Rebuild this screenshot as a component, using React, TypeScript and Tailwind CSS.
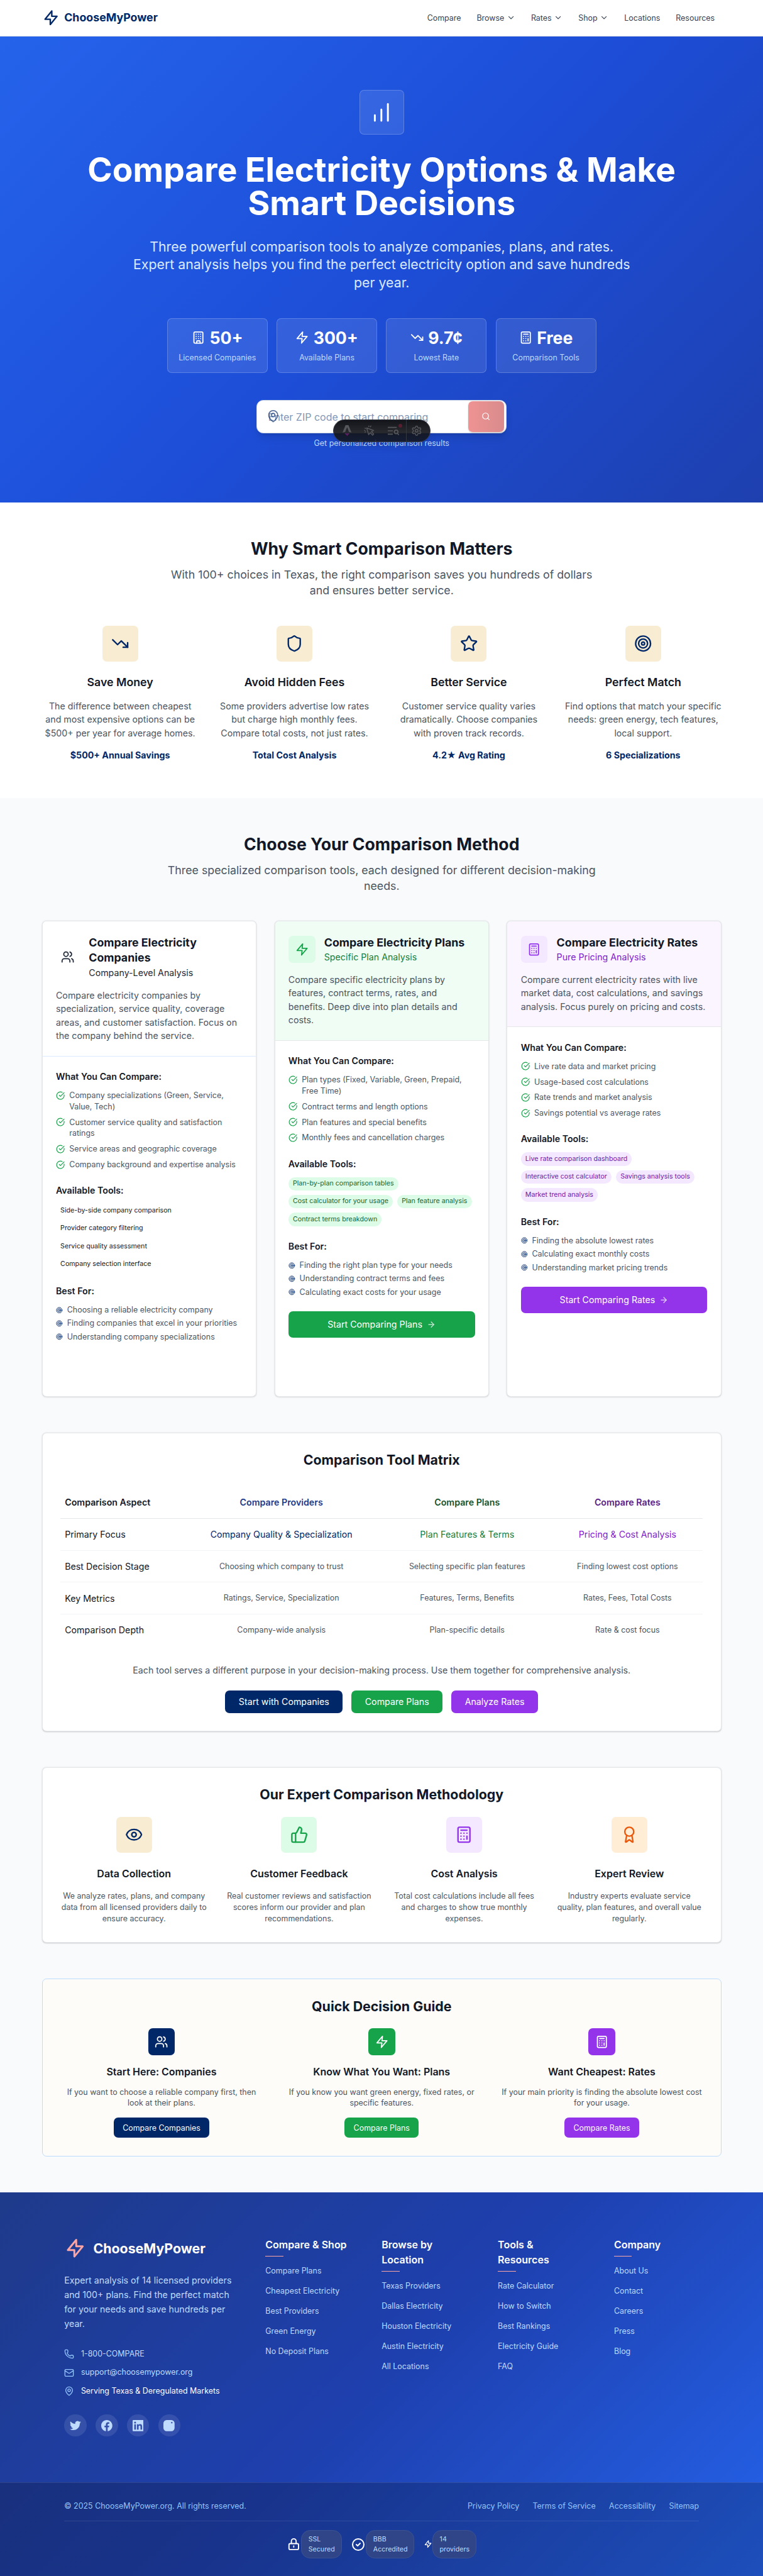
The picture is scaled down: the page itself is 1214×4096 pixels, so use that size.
import React from "react";
import {
  ArrowRight,
  Award,
  Building,
  Calculator,
  ChevronDown,
  CircleCheckBig,
  Eye,
  Mail,
  MapPin,
  Phone,
  Search,
  Settings,
  Shield,
  Star,
  Target,
  ThumbsUp,
  TrendingDown,
  Users,
} from "lucide-react";

type IconProps = { className?: string };
type IconType = React.ComponentType<IconProps>;

function Bolt({ className }: IconProps) {
  return (
    <svg className={className} viewBox="0 0 24 24" fill="none" stroke="currentColor" strokeWidth={2} strokeLinecap="round" strokeLinejoin="round">
      <path d="M13 10V3L4 14h7v7l9-11h-7z" />
    </svg>
  );
}

function Zap({ className }: IconProps) {
  return (
    <svg className={className} viewBox="0 0 24 24" fill="none" stroke="currentColor" strokeWidth={2} strokeLinecap="round" strokeLinejoin="round">
      <polygon points="13 2 3 14 12 14 11 22 21 10 12 10 13 2" />
    </svg>
  );
}

function Bars({ className }: IconProps) {
  return (
    <svg className={className} viewBox="0 0 24 24" fill="none" stroke="currentColor" strokeWidth={2} strokeLinecap="round">
      <path d="M5 21v-6M12 21V9M19 21V3" />
    </svg>
  );
}

function Lock({ className }: IconProps) {
  return (
    <svg className={className} viewBox="0 0 24 24" fill="none" stroke="currentColor" strokeWidth={2} strokeLinecap="round" strokeLinejoin="round">
      <path d="M12 15v2m-6 4h12a2 2 0 002-2v-6a2 2 0 00-2-2H6a2 2 0 00-2 2v6a2 2 0 002 2zm10-10V7a4 4 0 00-8 0v4h8z" />
    </svg>
  );
}

function CheckRing({ className }: IconProps) {
  return (
    <svg className={className} viewBox="0 0 24 24" fill="none" stroke="currentColor" strokeWidth={2} strokeLinecap="round" strokeLinejoin="round">
      <path d="M9 12l2 2 4-4m6 2a9 9 0 11-18 0 9 9 0 0118 0z" />
    </svg>
  );
}

const container = "mx-auto w-full max-w-[1280px] px-8";

function Header() {
  const nav: [string, boolean][] = [
    ["Compare", false],
    ["Browse", true],
    ["Rates", true],
    ["Shop", true],
    ["Locations", false],
    ["Resources", false],
  ];
  return (
    <header className="h-[65px] border-b border-[#e5e7eb] bg-white">
      <div className={`${container} flex h-16 items-center justify-between`}>
        <div className="flex items-center gap-2 text-[#002868]">
          <Bolt className="size-8" />
          <span className="text-xl font-bold">ChooseMyPower</span>
        </div>
        <nav className="flex gap-1 text-sm text-[#374151]">
          {nav.map(([label, menu]) => (
            <a key={label} className="flex items-center gap-1 px-3 py-2">
              {label}
              {menu && <ChevronDown className="size-4" />}
            </a>
          ))}
        </nav>
      </div>
    </header>
  );
}

function DevToolbar() {
  return (
    <div className="absolute left-[137px] top-[35px] flex h-[41px] w-[175px] items-center rounded-full border border-[#343841] bg-linear-to-b from-[#13151a] to-[#13151a]/85 text-[#55575c] shadow-lg">
      <div className="flex w-[44px] justify-center pl-1">
        <svg className="h-[20px] w-[16px]" viewBox="0 0 16 20">
          <path fill="#55575c" d="M5.4 0h5.2L16 13.4c-1.5-.6-3-.9-4.5-1.1L8.3 3.6 4.6 12.3c-1.5.2-3.1.5-4.6 1.1z" />
          <path fill="#5c1f63" d="M4 14.2c2.6 1.1 5.6 1.1 8.2 0 .2 2.3-2.6 2.6-3.7 5.6-1-2.6-4-2.6-4.5-5.6z" />
        </svg>
      </div>
      <div className="flex w-[40px] justify-center">
        <svg className="size-[20px]" viewBox="0 0 20 20" fill="none" stroke="currentColor" strokeWidth="1.7" strokeLinejoin="round" strokeLinecap="round">
          <path d="M5 5l3.500 12 3-3.500 4 4.500 2-2-4-4.500 4-2z" />
          <path d="M2 5.500l1 .4M1 9.500h1M9 1.500l-.5 1M12.500 1.500l-1 1.500M2 12.500l1-.6" />
        </svg>
      </div>
      <div className="relative flex w-[46px] justify-center">
        <svg className="h-[18px] w-[21px]" viewBox="0 0 21 18" fill="none" stroke="currentColor" strokeWidth="1.9">
          <path d="M0 3h16M0 9h9M0 15h9" />
          <circle cx="15" cy="11" r="3.2" />
          <path d="M17 13.500l3 3" />
        </svg>
        <span className="absolute right-[7px] top-[-4px] size-[7px] rounded-full bg-[#571f30]" />
      </div>
      <div className="flex h-full flex-1 items-center justify-center border-l border-[#343841] pr-[6px]">
        <Settings className="size-[20px]" />
      </div>
    </div>
  );
}

function Hero() {
  const stats: [IconType, string, string][] = [
    [Building, "50+", "Licensed Companies"],
    [Zap, "300+", "Available Plans"],
    [TrendingDown, "9.7¢", "Lowest Rate"],
    [Calculator, "Free", "Comparison Tools"],
  ];
  return (
    <section className="h-[834px] bg-[linear-gradient(135deg,#2563eb_0%,#1d4ed8_50%,#1e40af_100%)] pt-24 text-white">
      <div className={`${container} flex flex-col items-center text-center`}>
        <div className="flex size-20 items-center justify-center rounded-lg border border-white/20 bg-white/10">
          <Bars className="size-10" />
        </div>
        <h1 className="mt-8 text-6xl font-bold">
          Compare Electricity Options &amp; Make
          <br />
          Smart Decisions
        </h1>
        <p className="mt-8 w-[896px] text-2xl text-[#dbeafe]">
          Three powerful comparison tools to analyze companies, plans, and rates.
          <br />
          Expert analysis helps you find the perfect electricity option and save hundreds
          <br />
          per year.
        </p>
        <div className="mt-12 grid w-[768px] grid-cols-4 gap-4">
          {stats.map(([Icon, value, label]) => (
            <div key={label} className="rounded-lg border border-white/20 bg-white/10 p-4">
              <div className="flex items-center justify-center gap-2 text-3xl font-bold">
                <Icon className="size-6" />
                {value}
              </div>
              <div className="mt-2 whitespace-nowrap text-sm text-[#bfdbfe]">{label}</div>
            </div>
          ))}
        </div>
        <div className="relative mt-12 w-[448px]">
          <div className="flex h-[60px] items-center rounded-xl border-2 border-[#cbd5e1] bg-white pl-[20px] pr-1 shadow-lg">
            <span className="flex-1 pt-[2px] text-left text-lg text-[#8298b6]">Enter ZIP code to start comparing</span>
            <span className="flex h-14 w-16 items-center justify-center rounded-lg bg-linear-to-r from-[#ef9393] to-[#d98b8d] shadow-sm">
              <Search className="size-4" />
            </span>
          </div>
          <MapPin className="absolute left-[18px] top-[17px] size-6 text-[#002868]/65" />
          <p className="mt-2 text-sm text-[#bfdbfe]">Get personalized comparison results</p>
          <DevToolbar />
        </div>
      </div>
    </section>
  );
}

function SectionHead({ title, children }: { title: string; children: React.ReactNode }) {
  return (
    <div className="text-center">
      <h2 className="text-3xl font-bold text-[#111827]">{title}</h2>
      <p className="mx-auto mt-4 w-[780px] text-xl text-[#4b5563]">{children}</p>
    </div>
  );
}

function Why() {
  const items: [IconType, string, string[], string][] = [
    [TrendingDown, "Save Money", ["The difference between cheapest", "and most expensive options can be", "$500+ per year for average homes."], "$500+ Annual Savings"],
    [Shield, "Avoid Hidden Fees", ["Some providers advertise low rates", "but charge high monthly fees.", "Compare total costs, not just rates."], "Total Cost Analysis"],
    [Star, "Better Service", ["Customer service quality varies", "dramatically. Choose companies", "with proven track records."], "4.2★ Avg Rating"],
    [Target, "Perfect Match", ["Find options that match your specific", "needs: green energy, tech features,", "local support."], "6 Specializations"],
  ];
  return (
    <section className="h-[528px] bg-white pt-16">
      <div className={container}>
        <SectionHead title="Why Smart Comparison Matters">
          With 100+ choices in Texas, the right comparison saves you hundreds of dollars
          <br />
          and ensures better service.
        </SectionHead>
        <div className="mt-12 grid grid-cols-4 gap-8 text-center">
          {items.map(([Icon, title, lines, stat]) => (
            <div key={title} className="flex flex-col items-center">
              <div className="flex size-16 items-center justify-center rounded-lg bg-[#f8ecd3] text-[#002868]">
                <Icon className="size-8" />
              </div>
              <h3 className="mt-6 text-xl font-semibold text-[#111827]">{title}</h3>
              <p className="mt-4 whitespace-nowrap text-[#4b5563]">
                {lines.map((l) => (
                  <span key={l} className="block">
                    {l}
                  </span>
                ))}
              </p>
              <div className="mt-4 h-6 font-bold text-[#002868]">{stat}</div>
            </div>
          ))}
        </div>
      </div>
    </section>
  );
}

type Method = {
  icon: IconType;
  title: string;
  sub: string;
  lines: string[];
  compare: string[][];
  tools: string[];
  best: string[];
  cta?: string;
  head: string;
  box: string;
  subColor: string;
  chip: string;
  button: string;
};

const methods: Method[] = [
  {
    icon: Users,
    title: "Compare Electricity Companies",
    sub: "Company-Level Analysis",
    lines: ["Compare electricity companies by", "specialization, service quality, coverage", "areas, and customer satisfaction. Focus on", "the company behind the service."],
    compare: [["Company specializations (Green, Service,", "Value, Tech)"], ["Customer service quality and satisfaction", "ratings"], ["Service areas and geographic coverage"], ["Company background and expertise analysis"]],
    tools: ["Side-by-side company comparison", "Provider category filtering", "Service quality assessment", "Company selection interface"],
    best: ["Choosing a reliable electricity company", "Finding companies that excel in your priorities", "Understanding company specializations"],
    head: "border-[#dbeafe] bg-white",
    box: "text-[#1f2937]",
    subColor: "text-[#1f2937]",
    chip: "text-[#111827]",
    button: "",
  },
  {
    icon: Zap,
    title: "Compare Electricity Plans",
    sub: "Specific Plan Analysis",
    lines: ["Compare specific electricity plans by", "features, contract terms, rates, and", "benefits. Deep dive into plan details and", "costs."],
    compare: [["Plan types (Fixed, Variable, Green, Prepaid,", "Free Time)"], ["Contract terms and length options"], ["Plan features and special benefits"], ["Monthly fees and cancellation charges"]],
    tools: ["Plan-by-plan comparison tables", "Cost calculator for your usage", "Plan feature analysis", "Contract terms breakdown"],
    best: ["Finding the right plan type for your needs", "Understanding contract terms and fees", "Calculating exact costs for your usage"],
    cta: "Start Comparing Plans",
    head: "border-[#e5e7eb] bg-[#f0fdf4]",
    box: "bg-[#dcfce7] text-[#16a34a]",
    subColor: "text-[#15803d]",
    chip: "bg-[#dcfce7] text-[#166534]",
    button: "bg-[#16a34a]",
  },
  {
    icon: Calculator,
    title: "Compare Electricity Rates",
    sub: "Pure Pricing Analysis",
    lines: ["Compare current electricity rates with live", "market data, cost calculations, and savings", "analysis. Focus purely on pricing and costs."],
    compare: [["Live rate data and market pricing"], ["Usage-based cost calculations"], ["Rate trends and market analysis"], ["Savings potential vs average rates"]],
    tools: ["Live rate comparison dashboard", "Interactive cost calculator", "Savings analysis tools", "Market trend analysis"],
    best: ["Finding the absolute lowest rates", "Calculating exact monthly costs", "Understanding market pricing trends"],
    cta: "Start Comparing Rates",
    head: "border-[#e5e7eb] bg-[#faf5ff]",
    box: "bg-[#f3e8ff] text-[#9333ea]",
    subColor: "text-[#7e22ce]",
    chip: "bg-[#f3e8ff] text-[#6b21a8]",
    button: "bg-[#9333ea]",
  },
];

function MethodCard({ m }: { m: Method }) {
  const Icon = m.icon;
  return (
    <div className="overflow-hidden rounded-lg border border-[#e5e7eb] bg-white shadow-sm">
      <div className={`border-b p-6 ${m.head}`}>
        <div className="flex items-center gap-4">
          <div className={`flex h-12 w-12 items-center justify-center rounded-lg ${m.box}`}>
            <Icon className="size-6" />
          </div>
          <div>
            <h3 className="text-xl font-bold text-[#111827]">{m.title}</h3>
            <p className={m.subColor}>{m.sub}</p>
          </div>
        </div>
        <p className="mt-4 whitespace-nowrap text-[#4b5563]">
          {m.lines.map((l) => (
            <span key={l} className="block">
              {l}
            </span>
          ))}
        </p>
      </div>
      <div className="p-6">
        <h4 className="font-semibold text-[#111827]">What You Can Compare:</h4>
        <ul className="mt-3 flex flex-col gap-2 text-sm text-[#4b5563]">
          {m.compare.map((lines) => (
            <li key={lines[0]} className="flex gap-2 whitespace-nowrap">
              <CircleCheckBig className="mt-0.5 size-4 shrink-0 text-[#16a34a]" />
              <span>
                {lines.map((l) => (
                  <span key={l} className="block">
                    {l}
                  </span>
                ))}
              </span>
            </li>
          ))}
        </ul>
        <h4 className="mt-6 font-semibold text-[#111827]">Available Tools:</h4>
        <div className="mt-3 flex flex-wrap gap-2 text-xs">
          {m.tools.map((t) => (
            <span key={t} className={`rounded-full px-2 py-1 ${m.chip}`}>
              {t}
            </span>
          ))}
        </div>
        <h4 className="mt-6 font-semibold text-[#111827]">Best For:</h4>
        <ul className="mt-3 flex flex-col gap-1 text-sm text-[#4b5563]">
          {m.best.map((b) => (
            <li key={b} className="flex items-center gap-2 whitespace-nowrap">
              <Target className="size-3 shrink-0 text-[#002868]" />
              {b}
            </li>
          ))}
        </ul>
        {m.cta && (
          <button className={`mt-6 flex h-12 w-full items-center justify-center gap-2 rounded-lg text-white ${m.button}`}>
            {m.cta}
            <ArrowRight className="size-4 opacity-80" />
          </button>
        )}
      </div>
    </div>
  );
}

function Matrix() {
  const rows = [
    ["Primary Focus", "Company Quality & Specialization", "Plan Features & Terms", "Pricing & Cost Analysis"],
    ["Best Decision Stage", "Choosing which company to trust", "Selecting specific plan features", "Finding lowest cost options"],
    ["Key Metrics", "Ratings, Service, Specialization", "Features, Terms, Benefits", "Rates, Fees, Total Costs"],
    ["Comparison Depth", "Company-wide analysis", "Plan-specific details", "Rate & cost focus"],
  ];
  const focus = ["", "text-[#002868]", "text-[#15803d]", "text-[#7e22ce]"];
  const cols = "grid grid-cols-[215fr_361fr_304fr_270fr] items-center";
  return (
    <div className="mt-16 rounded-lg border border-[#e5e7eb] bg-white p-8 shadow-sm">
      <h2 className="text-center text-2xl font-bold text-[#111827]">Comparison Tool Matrix</h2>
      <div className="mt-8 text-center">
        <div className={`${cols} border-b-2 border-[#e5e7eb] py-4 font-semibold`}>
          <div className="pl-2 text-left text-[#111827]">Comparison Aspect</div>
          <div className="text-[#1e3a8a]">Compare Providers</div>
          <div className="text-[#14532d]">Compare Plans</div>
          <div className="text-[#581c87]">Compare Rates</div>
        </div>
        {rows.map((row, i) => (
          <div key={row[0]} className={`${cols} border-[#f3f4f6] py-4 ${i < 3 ? "border-b" : ""}`}>
            {row.map((cell, j) => (
              <div
                key={cell}
                className={j === 0 ? "pl-2 text-left text-[#111827]" : i === 0 ? focus[j] : "text-sm text-[#4b5563]"}
              >
                {cell}
              </div>
            ))}
          </div>
        ))}
      </div>
      <p className="mt-8 text-center text-[#4b5563]">
        Each tool serves a different purpose in your decision-making process. Use them together for comprehensive analysis.
      </p>
      <div className="mt-6 flex justify-center gap-4 text-white">
        <button className="rounded-lg bg-[#002868] px-6 py-2">Start with Companies</button>
        <button className="rounded-lg bg-[#16a34a] px-6 py-2">Compare Plans</button>
        <button className="rounded-lg bg-[#9333ea] px-6 py-2">Analyze Rates</button>
      </div>
    </div>
  );
}

function Methodology() {
  const items: [IconType, string, string, string[]][] = [
    [Eye, "bg-[#f8ecd3] text-[#002868]", "Data Collection", ["We analyze rates, plans, and company", "data from all licensed providers daily to", "ensure accuracy."]],
    [ThumbsUp, "bg-[#dcfce7] text-[#16a34a]", "Customer Feedback", ["Real customer reviews and satisfaction", "scores inform our provider and plan", "recommendations."]],
    [Calculator, "bg-[#f3e8ff] text-[#9333ea]", "Cost Analysis", ["Total cost calculations include all fees", "and charges to show true monthly", "expenses."]],
    [Award, "bg-[#ffedd5] text-[#ea580c]", "Expert Review", ["Industry experts evaluate service", "quality, plan features, and overall value", "regularly."]],
  ];
  return (
    <div className="mt-16 rounded-lg border border-[#e5e7eb] bg-white p-8 text-center shadow-sm">
      <h2 className="text-2xl font-bold text-[#111827]">Our Expert Comparison Methodology</h2>
      <div className="mt-6 grid grid-cols-4 gap-8">
        {items.map(([Icon, tone, title, lines]) => (
          <div key={title} className="flex flex-col items-center">
            <div className={`flex size-16 items-center justify-center rounded-lg ${tone}`}>
              <Icon className="size-8" />
            </div>
            <h3 className="mt-6 text-lg font-semibold text-[#111827]">{title}</h3>
            <p className="mt-4 whitespace-nowrap text-sm text-[#4b5563]">
              {lines.map((l) => (
                <span key={l} className="block">
                  {l}
                </span>
              ))}
            </p>
          </div>
        ))}
      </div>
    </div>
  );
}

function Guide() {
  const items: [IconType, string, string, string[], string][] = [
    [Users, "bg-[#002868]", "Start Here: Companies", ["If you want to choose a reliable company first, then", "look at their plans."], "Compare Companies"],
    [Zap, "bg-[#16a34a]", "Know What You Want: Plans", ["If you know you want green energy, fixed rates, or", "specific features."], "Compare Plans"],
    [Calculator, "bg-[#9333ea]", "Want Cheapest: Rates", ["If your main priority is finding the absolute lowest cost", "for your usage."], "Compare Rates"],
  ];
  return (
    <div className="mt-16 rounded-lg border border-[#bfdbfe] bg-[#fefcf8] p-8 text-center">
      <h2 className="text-2xl font-bold text-[#111827]">Quick Decision Guide</h2>
      <div className="mt-6 grid grid-cols-3 gap-8">
        {items.map(([Icon, bg, title, lines, cta]) => (
          <div key={title} className="flex flex-col items-center">
            <div className={`flex size-12 items-center justify-center rounded-lg text-white ${bg}`}>
              <Icon className="size-6" />
            </div>
            <h3 className="mt-4 text-lg font-semibold text-[#111827]">{title}</h3>
            <p className="mt-3 whitespace-nowrap text-sm text-[#4b5563]">
              {lines.map((l) => (
                <span key={l} className="block">
                  {l}
                </span>
              ))}
            </p>
            <button className={`mt-4 rounded-lg px-4 py-2 text-sm text-white ${bg}`}>{cta}</button>
          </div>
        ))}
      </div>
    </div>
  );
}

const socials: [string, string][] = [
  ["twitter", "M23.953 4.57a10 10 0 01-2.825.775 4.958 4.958 0 002.163-2.723c-.951.555-2.005.959-3.127 1.184a4.920 4.920 0 00-8.384 4.482C7.690 8.095 4.067 6.130 1.640 3.162a4.822 4.822 0 00-.666 2.475c0 1.710.870 3.213 2.188 4.096a4.904 4.904 0 01-2.228-.616v.060a4.923 4.923 0 003.946 4.827 4.996 4.996 0 01-2.212.085 4.936 4.936 0 004.604 3.417 9.867 9.867 0 01-6.102 2.105c-.390 0-.779-.023-1.170-.067a13.995 13.995 0 007.557 2.209c9.053 0 13.998-7.496 13.998-13.985 0-.210 0-.420-.015-.630A9.935 9.935 0 0024 4.590z"],
  ["facebook", "M24 12.073c0-6.627-5.373-12-12-12s-12 5.373-12 12c0 5.990 4.388 10.954 10.125 11.854v-8.385H7.078v-3.470h3.047V9.430c0-3.007 1.792-4.669 4.533-4.669 1.312 0 2.686.235 2.686.235v2.953H15.830c-1.491 0-1.956.925-1.956 1.874v2.250h3.328l-.532 3.470h-2.796v8.385C19.612 23.027 24 18.062 24 12.073z"],
  ["linkedin", "M20.447 20.452h-3.554v-5.569c0-1.328-.027-3.037-1.852-3.037-1.853 0-2.136 1.445-2.136 2.939v5.667H9.351V9h3.414v1.561h.046c.477-.9 1.637-1.850 3.370-1.850 3.601 0 4.267 2.370 4.267 5.455v6.286zM5.337 7.433a2.062 2.062 0 01-2.063-2.065 2.064 2.064 0 112.063 2.065zm1.782 13.019H3.555V9h3.564v11.452zM22.225 0H1.771C.792 0 0 .774 0 1.729v20.542C0 23.227.792 24 1.771 24h20.451C23.200 24 24 23.227 24 22.271V1.729C24 .774 23.200 0 22.222 0h.003z"],
  ["instagram", "M7 0h10a7 7 0 017 7v10a7 7 0 01-7 7H7a7 7 0 01-7-7V7a7 7 0 017-7zM18 4a1.600 1.600 0 100 3.200 1.600 1.600 0 000-3.200z"],
];

function Footer() {
  const cols: [string[], string[]][] = [
    [["Compare & Shop"], ["Compare Plans", "Cheapest Electricity", "Best Providers", "Green Energy", "No Deposit Plans"]],
    [["Browse by", "Location"], ["Texas Providers", "Dallas Electricity", "Houston Electricity", "Austin Electricity", "All Locations"]],
    [["Tools &", "Resources"], ["Rate Calculator", "How to Switch", "Best Rankings", "Electricity Guide", "FAQ"]],
    [["Company"], ["About Us", "Contact", "Careers", "Press", "Blog"]],
  ];
  return (
    <footer className="h-[688px] bg-[linear-gradient(135deg,#1e3a8a_0%,#1e40af_50%,#2563eb_100%)] text-white">
      <div className="mx-auto h-[518px] w-[1136px] pt-20">
        <div className="grid grid-cols-[304px_152px_152px_152px_152px] gap-14">
          <div>
            <div className="flex items-center gap-3">
              <Bolt className="size-10 text-[#fca5a5]" />
              <span className="text-2xl font-bold">ChooseMyPower</span>
            </div>
            <p className="mt-6 whitespace-nowrap leading-[26px] text-[#bfdbfe]">
              Expert analysis of 14 licensed providers
              <br />
              and 100+ plans. Find the perfect match
              <br />
              for your needs and save hundreds per
              <br />
              year.
            </p>
            <div className="mt-[31px] flex flex-col gap-[12px] whitespace-nowrap text-sm leading-[21px] text-[#bfdbfe]">
              <div className="flex items-center gap-3">
                <Phone className="size-[18px] text-[#93c5fd]" />
                1-800-COMPARE
              </div>
              <div className="flex items-center gap-3">
                <Mail className="size-[18px] text-[#93c5fd]" />
                support@choosemypower.org
              </div>
              <div className="flex items-center gap-3 text-white">
                <MapPin className="size-[18px] text-[#93c5fd]" />
                Serving Texas &amp; Deregulated Markets
              </div>
            </div>
            <div className="mt-[31px] flex gap-4">
              {socials.map(([name, d]) => (
                <a key={name} className="flex size-10 items-center justify-center rounded-full bg-white/10 text-[#bfdbfe]">
                  <svg className="size-5" viewBox="0 0 24 24" fill="currentColor" fillRule="evenodd">
                    <path d={d} />
                  </svg>
                </a>
              ))}
            </div>
          </div>
          {cols.map(([head, links]) => (
            <div key={head[0]} className="whitespace-nowrap">
              <h3 className="text-[18px] font-semibold leading-[27px]">
                {head.map((h) => (
                  <span key={h} className="block">
                    {h}
                  </span>
                ))}
              </h3>
              <div className="mt-[6px] h-[2px] w-8 bg-[#fca5a5]" />
              <ul className="mt-[13px] flex flex-col gap-3 text-sm leading-6 text-[#bfdbfe]">
                {links.map((l) => (
                  <li key={l} className="h-6">
                    {l}
                  </li>
                ))}
              </ul>
            </div>
          ))}
        </div>
      </div>
      <div className="h-[170px] border-t border-white/10 bg-black/20 pt-8">
        <div className="mx-auto w-[1136px]">
          <div className="flex h-5 items-center justify-between text-sm text-[#93c5fd]">
            <span>© 2025 ChooseMyPower.org. All rights reserved.</span>
            <span className="flex gap-6">
              <a>Privacy Policy</a>
              <a>Terms of Service</a>
              <a>Accessibility</a>
              <a>Sitemap</a>
            </span>
          </div>
          <div className="mt-4 flex items-center justify-center gap-4 border-t-2 border-white/10 pt-4 text-xs leading-[18px] text-[#bfdbfe]">
            <div className="flex items-center">
              <Lock className="size-[25.6px] text-white" />
              <span className="w-[73px] rounded-2xl border border-[#3d5290] bg-[#2f4587] px-3 py-[6px]">
                SSL
                <br />
                Secured
              </span>
            </div>
            <div className="flex items-center">
              <CheckRing className="size-[27px] text-white" />
              <span className="w-[87px] rounded-2xl border border-[#3d5290] bg-[#2f4587] px-3 py-[6px]">
                BBB
                <br />
                Accredited
              </span>
            </div>
            <div className="flex items-center">
              <Bolt className="size-4 text-white" />
              <span className="w-[79px] rounded-2xl border border-[#3d5290] bg-[#2f4587] px-3 py-[6px]">
                14
                <br />
                providers
              </span>
            </div>
          </div>
        </div>
      </div>
    </footer>
  );
}

export default function App() {
  return (
    <div className="h-[4096px] w-full overflow-hidden">
      <div className="w-[1366px] bg-white font-['Inter',sans-serif] text-base [zoom:0.88908]">
        <Header />
        <Hero />
        <Why />
        <section className="h-[2494px] bg-[#f9fafb] pt-16">
          <div className={container}>
            <SectionHead title="Choose Your Comparison Method">
              Three specialized comparison tools, each designed for different decision-making
              <br />
              needs.
            </SectionHead>
            <div className="mt-12 grid h-[851px] grid-cols-3 gap-8">
              {methods.map((m) => (
                <MethodCard key={m.title} m={m} />
              ))}
            </div>
            <Matrix />
            <Methodology />
            <Guide />
          </div>
        </section>
        <Footer />
      </div>
    </div>
  );
}
